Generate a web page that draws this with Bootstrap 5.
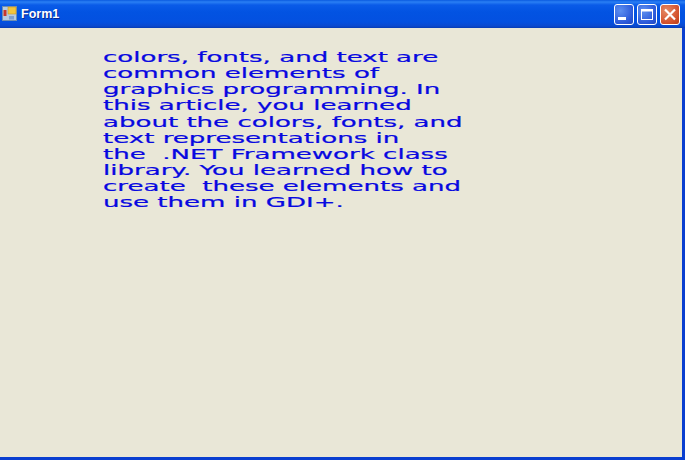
<!DOCTYPE html>
<html lang="en">
<head>
<meta charset="utf-8">
<title>Form1</title>
<link href="https://cdn.jsdelivr.net/npm/bootstrap@5.3.0/dist/css/bootstrap.min.css" rel="stylesheet">
<style>
html, body { margin: 0; height: 460px; overflow: hidden; background: #e9e7d7; }
.xp-window { width: 685px; height: 460px; background: #0a3fd0; overflow: hidden; }
.xp-title {
  height: 28px; flex: none; padding: 0 5px 0 2px;
  background: linear-gradient(to bottom, #0a5ae0 0, #2a7ff4 2px, #0a5be8 5px, #0253e2 12px, #0350e0 22px, #0a49cf 26px, #063cb4 28px);
}
.xp-icon { display: block; flex: none; }
.xp-name { font: bold 12.5px/1 "Liberation Sans", sans-serif; color: #fff; text-shadow: 1px 1px 0 #0a2a90; margin-left: 3px; }
.xp-btn { width: 20px; height: 21px; border: 1px solid #fff; border-radius: 3px; background: radial-gradient(circle at 30% 30%, #5d8ff0, #2a57d8 70%, #2048c0); margin-left: 3px; }
.xp-btn svg { display: block; }
.xp-close { background: radial-gradient(circle at 30% 30%, #e58a66, #d4532e 65%, #b83c18); }
.xp-body { flex: 1 1 auto; background: #e9e7d7; margin: 0 3px 3px 0; padding: 21px 0 0 103px; overflow: hidden; }
.xp-text {
  font: 14px/16.15px "DejaVu Sans", sans-serif; color: #0808e0; white-space: pre; margin: 0;
  transform: scaleX(1.86); transform-origin: 0 0;
  -webkit-text-stroke: .2px #0808e0;
  width: 300px;
}
</style>
</head>
<body>
<div class="xp-window d-flex flex-column">
  <div class="xp-title d-flex align-items-center">
    <svg class="xp-icon" width="16" height="16" viewBox="0 0 16 16">
      <rect x=".5" y=".5" width="14" height="14" fill="#b8cbe0" stroke="#6f8fb0"/>
      <rect x="6" y="1" width="8" height="7" fill="#f4c63c" stroke="#c9962a" stroke-width=".6"/>
      <rect x="1.5" y="4" width="3" height="6" fill="#c8362c"/>
      <rect x="7" y="10" width="5" height="3.5" fill="#7fa0d0"/>
    </svg>
    <span class="xp-name">Form1</span>
    <div class="d-flex ms-auto">
      <div class="xp-btn">
        <svg width="18" height="19" viewBox="0 0 18 19"><rect x="3" y="12" width="8" height="3" fill="#fff"/></svg>
      </div>
      <div class="xp-btn">
        <svg width="18" height="19" viewBox="0 0 18 19"><rect x="3.5" y="4.5" width="11" height="10" fill="none" stroke="#fff"/><rect x="3" y="4" width="12" height="2.5" fill="#fff"/></svg>
      </div>
      <div class="xp-btn xp-close">
        <svg width="18" height="19" viewBox="0 0 18 19"><path d="M4 4.5 14 14.5M14 4.5 4 14.5" stroke="#fff" stroke-width="2.2" fill="none"/></svg>
      </div>
    </div>
  </div>
  <div class="xp-body">
    <p class="xp-text">colors, fonts, and text are
common elements of
graphics programming. In
this article, you learned
about the colors, fonts, and
text representations in
the  .NET Framework class
library. You learned how to
create  these elements and
use them in GDI+.</p>
  </div>
</div>
<script src="https://cdn.jsdelivr.net/npm/bootstrap@5.3.0/dist/js/bootstrap.bundle.min.js"></script>
</body>
</html>
